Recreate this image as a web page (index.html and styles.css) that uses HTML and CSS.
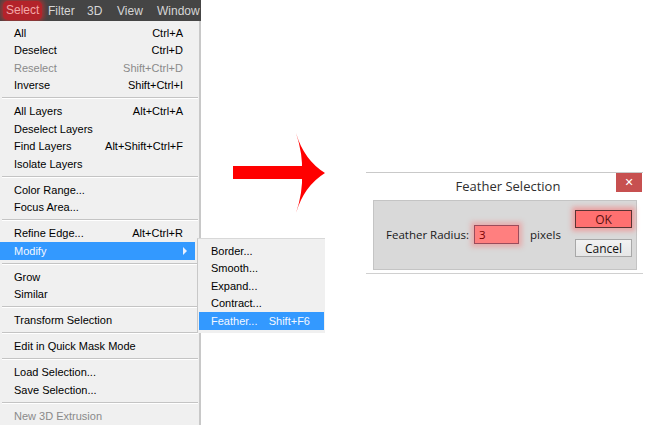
FILE: index.html
```html
<!DOCTYPE html>
<html>
<head>
<meta charset="utf-8">
<link rel="stylesheet" href="styles.css">
</head>
<body>
<div class="page">
  <div class="left">
    <div class="menubar">
      <span class="mb mb-select"><span class="sel-glow">Select</span></span>
      <span class="mb mb-filter">Filter</span>
      <span class="mb mb-3d">3D</span>
      <span class="mb mb-view">View</span>
      <span class="mb mb-window">Window</span>
    </div>
    <div class="menu">
      <div class="item"><span>All</span><span>Ctrl+A</span></div>
      <div class="item"><span>Deselect</span><span>Ctrl+D</span></div>
      <div class="item disabled"><span>Reselect</span><span>Shift+Ctrl+D</span></div>
      <div class="item"><span>Inverse</span><span>Shift+Ctrl+I</span></div>
      <div class="sep"></div>
      <div class="item"><span>All Layers</span><span>Alt+Ctrl+A</span></div>
      <div class="item"><span>Deselect Layers</span><span></span></div>
      <div class="item"><span>Find Layers</span><span>Alt+Shift+Ctrl+F</span></div>
      <div class="item"><span>Isolate Layers</span><span></span></div>
      <div class="sep"></div>
      <div class="item"><span>Color Range...</span><span></span></div>
      <div class="item"><span>Focus Area...</span><span></span></div>
      <div class="sep"></div>
      <div class="item"><span>Refine Edge...</span><span>Alt+Ctrl+R</span></div>
      <div class="item active sub"><span>Modify</span><span class="tri"></span></div>
      <div class="sep"></div>
      <div class="item"><span>Grow</span><span></span></div>
      <div class="item"><span>Similar</span><span></span></div>
      <div class="sep"></div>
      <div class="item"><span>Transform Selection</span><span></span></div>
      <div class="sep"></div>
      <div class="item"><span>Edit in Quick Mask Mode</span><span></span></div>
      <div class="sep"></div>
      <div class="item"><span>Load Selection...</span><span></span></div>
      <div class="item"><span>Save Selection...</span><span></span></div>
      <div class="sep"></div>
      <div class="item disabled"><span>New 3D Extrusion</span><span></span></div>
    </div>
  </div>

  <div class="submenu">
    <div class="item"><span>Border...</span><span></span></div>
    <div class="item"><span>Smooth...</span><span></span></div>
    <div class="item"><span>Expand...</span><span></span></div>
    <div class="item"><span>Contract...</span><span></span></div>
    <div class="item active"><span>Feather...</span><span>Shift+F6</span></div>
  </div>

  <svg class="arrow" width="110" height="95" viewBox="220 125 110 95">
    <rect x="233" y="166" width="70" height="13" fill="#ff0000"/>
    <path d="M296,133 Q304,160 325,173 Q304,186 296,213 Q303,192 302,173 Q303,154 296,133 Z" fill="#ff0000"/>
  </svg>

  <div class="dialog">
    <div class="titlebar">
      <span class="title">Feather Selection</span>
      <span class="close">&#x2715;</span>
    </div>
    <div class="panel">
      <div class="field">
        <span class="label">Feather Radius:</span>
        <span class="input">3</span>
        <span class="unit">pixels</span>
      </div>
      <div class="buttons">
        <span class="btn ok">OK</span>
        <span class="btn cancel">Cancel</span>
      </div>
    </div>
  </div>
</div>
</body>
</html>
```

FILE: styles.css
```css
html, body {
  margin: 0;
  padding: 0;
  background: #ffffff;
}
.page {
  position: relative;
  width: 650px;
  height: 425px;
  overflow: hidden;
  font-family: "Liberation Sans", Arial, sans-serif;
}
.left {
  width: 201px;
  display: flex;
  flex-direction: column;
}
.menubar {
  height: 21px;
  background: #454545;
  display: flex;
  align-items: center;
  font-size: 12px;
  color: #d6d6d6;
  white-space: nowrap;
  overflow: hidden;
}
.mb { flex: none; }
.mb-select { width: 48px; padding-left: 3px; box-sizing: border-box; }
.mb-filter { width: 39px; }
.mb-3d { width: 30px; }
.mb-view { width: 40px; }
.sel-glow {
  display: inline-block;
  padding: 2px 3px 3px 3px;
  background: #b3232a;
  border-radius: 5px;
  color: #f3a8a8;
  box-shadow: 0 0 5px 2px rgba(230, 40, 40, 0.6);
}
.menu {
  height: 404px;
  background: #f0f0f0;
  border-right: 2px solid #c8c8c8;
  padding-top: 3px;
  box-sizing: border-box;
  font-size: 11px;
}
.item {
  height: 17.5px;
  display: flex;
  align-items: center;
  justify-content: space-between;
  padding: 0 16px 0 14px;
  color: #000;
  white-space: nowrap;
}
.item.disabled { color: #8a8a8a; }
.item.active {
  background: #3399ff;
  color: #f4f8ff;
}
.menu .item.active { margin-right: 4px; padding-right: 8px; }
.tri {
  width: 0;
  height: 0;
  border-left: 4px solid #e8f0ff;
  border-top: 4px solid transparent;
  border-bottom: 4px solid transparent;
}
.sep {
  height: 8.5px;
  display: flex;
  align-items: center;
  padding: 0 1px 0 2px;
}
.sep::before {
  content: "";
  flex: 1;
  height: 1px;
  background: #c4c4c4;
  border-bottom: 1px solid #ffffff;
}
.submenu {
  position: absolute;
  left: 197px;
  top: 238px;
  width: 128px;
  height: 95px;
  box-sizing: border-box;
  background: #f0f0f0;
  border-left: 1px solid #c8c8c8;
  border-top: 1px solid #d8d8d8;
  padding: 3px 1px 0 1px;
  font-size: 11px;
}
.submenu .item { padding: 0 14px 0 12px; }
.arrow {
  position: absolute;
  left: 220px;
  top: 125px;
}
.dialog {
  position: absolute;
  left: 366px;
  top: 172px;
  width: 277px;
  height: 102px;
  box-sizing: border-box;
  background: #ffffff;
  border-top: 1px solid #c9c9c9;
  border-bottom: 1px solid #d0d0d0;
  display: flex;
  flex-direction: column;
  font-family: "Open Sans", "Noto Sans", sans-serif;
}
.titlebar {
  height: 27px;
  position: relative;
  display: flex;
  align-items: center;
  justify-content: center;
}
.title {
  font-size: 13px;
  color: #2f2f2f;
  margin-top: -2px;
  margin-left: 7px;
}
.close {
  position: absolute;
  right: 1px;
  top: 0;
  width: 26px;
  height: 19px;
  background: #c75050;
  color: #ffffff;
  font-size: 11px;
  font-weight: bold;
  display: flex;
  align-items: center;
  justify-content: center;
  font-family: "DejaVu Sans", sans-serif;
}
.panel {
  margin: 0 6px 0 7px;
  height: 70px;
  background: #d9d9d9;
  border: 1px solid #c4c4c4;
  box-sizing: border-box;
  display: flex;
  justify-content: space-between;
  padding: 9px 4px 0 12px;
}
.field {
  display: flex;
  align-items: center;
  height: 48px;
  font-size: 11.5px;
  color: #1a1a1a;
}
.label { margin-right: 5px; }
.input {
  width: 45px;
  height: 19px;
  box-sizing: border-box;
  background: #ff7f7f;
  border: 1px solid #9a4c5c;
  color: #7a0000;
  padding-left: 4px;
  line-height: 17px;
  box-shadow: 0 0 5px 3px rgba(255, 90, 90, 0.35);
  margin-right: 11px;
}
.buttons {
  display: flex;
  flex-direction: column;
  gap: 11px;
}
.btn {
  width: 57px;
  height: 18px;
  box-sizing: border-box;
  display: flex;
  align-items: center;
  justify-content: center;
  font-size: 12px;
}
.ok {
  background: #ff7070;
  border: 1px solid #5a3434;
  color: #5a1010;
  box-shadow: 0 0 5px 3px rgba(255, 90, 90, 0.45);
}
.cancel {
  background: linear-gradient(#f2f2f2, #e6e6e6);
  border: 1px solid #a8a8a8;
  color: #111;
}
```
